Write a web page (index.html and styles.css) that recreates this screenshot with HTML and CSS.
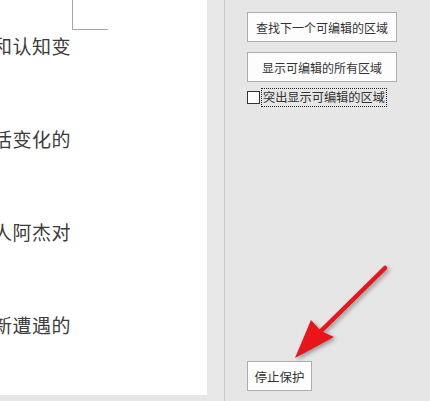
FILE: index.html
```html
<!DOCTYPE html>
<html lang="zh-CN">
<head>
    <meta charset="UTF-8">
    <meta name="viewport" content="width=device-width, initial-scale=1.0">
    <title>限制编辑</title>
    <link rel="stylesheet" href="styles.css">
</head>
<body>
    <!-- 文档页面 -->
    <div class="doc">
        <div class="corner-mark"></div>
        <div class="doc-line">和认知变</div>
        <div class="doc-line">活变化的</div>
        <div class="doc-line">人阿杰对</div>
        <div class="doc-line">新遭遇的</div>
    </div>

    <!-- 限制编辑窗格 -->
    <div class="pane">
        <div class="pane-gap"></div>
        <div class="pane-divider"></div>
        <div class="controls">
            <button class="btn btn-wide">查找下一个可编辑的区域</button>
            <button class="btn btn-wide">显示可编辑的所有区域</button>
            <label class="check-row">
                <span class="check-box"></span>
                <span class="check-label">突出显示可编辑的区域</span>
            </label>
            <button class="btn btn-stop">停止保护</button>
        </div>
    </div>

    <!-- 标注箭头 -->
    <svg class="arrow" width="430" height="401" viewBox="0 0 430 401">
        <line x1="385" y1="268" x2="320" y2="332" stroke="#e8161b" stroke-width="4.5" stroke-linecap="round"/>
        <polygon points="295,358 311,320 321,331 334,337" fill="#e8161b"/>
    </svg>
</body>
</html>
```

FILE: styles.css
```css
* {
    margin: 0;
    padding: 0;
    box-sizing: border-box;
}

body {
    font-family: "Noto Sans CJK SC", "Microsoft YaHei", sans-serif;
    background: #e6e6e6;
    color: #333;
    width: 430px;
    height: 401px;
    overflow: hidden;
    display: flex;
    position: relative;
}

.doc {
    width: 207px;
    height: 395px;
    background: #fff;
    position: relative;
    overflow: hidden;
}

/* 页面角标 */
.corner-mark {
    position: absolute;
    left: 72px;
    top: 0;
    width: 36px;
    height: 30px;
    border-left: 1px solid #a6a6a6;
    border-bottom: 1px solid #a6a6a6;
}

.doc-line {
    font-size: 19px;
    line-height: 93px;
    margin: -1px 0 1px -7px;
    white-space: nowrap;
    color: #3c3c3c;
    letter-spacing: 0.5px;
}

.pane {
    flex: 1;
    display: flex;
    height: 401px;
}

.pane-gap {
    width: 17px;
    background: #e8e8e8;
}

.pane-divider {
    width: 1px;
    background: #c6c6c6;
}

.controls {
    flex: 1;
    display: flex;
    flex-direction: column;
    align-items: flex-start;
    padding: 12px 0 10px 22px;
}

.btn {
    font-family: inherit;
    background: #fdfdfd;
    border: 1px solid #adadad;
    color: #333;
    font-size: 12px;
    height: 30px;
    cursor: pointer;
}

.btn-wide {
    width: 150px;
    margin-bottom: 10px;
}

.check-row {
    display: flex;
    align-items: center;
    margin-top: -4px;
    height: 19px;
}

.check-box {
    width: 13px;
    height: 13px;
    border: 1px solid #333;
    background: #fff;
    margin: 0 1px 0 0;
}

.check-label {
    font-size: 12.2px;
    line-height: 17px;
    padding: 0 1px;
    border: 1px dotted #222;
    white-space: nowrap;
}

.btn-stop {
    margin-top: auto;
    width: 65px;
    font-size: 12.5px;
}

.arrow {
    position: absolute;
    left: 0;
    top: 0;
    pointer-events: none;
    filter: drop-shadow(2px 2px 2px rgba(0, 0, 0, 0.35));
}
```
